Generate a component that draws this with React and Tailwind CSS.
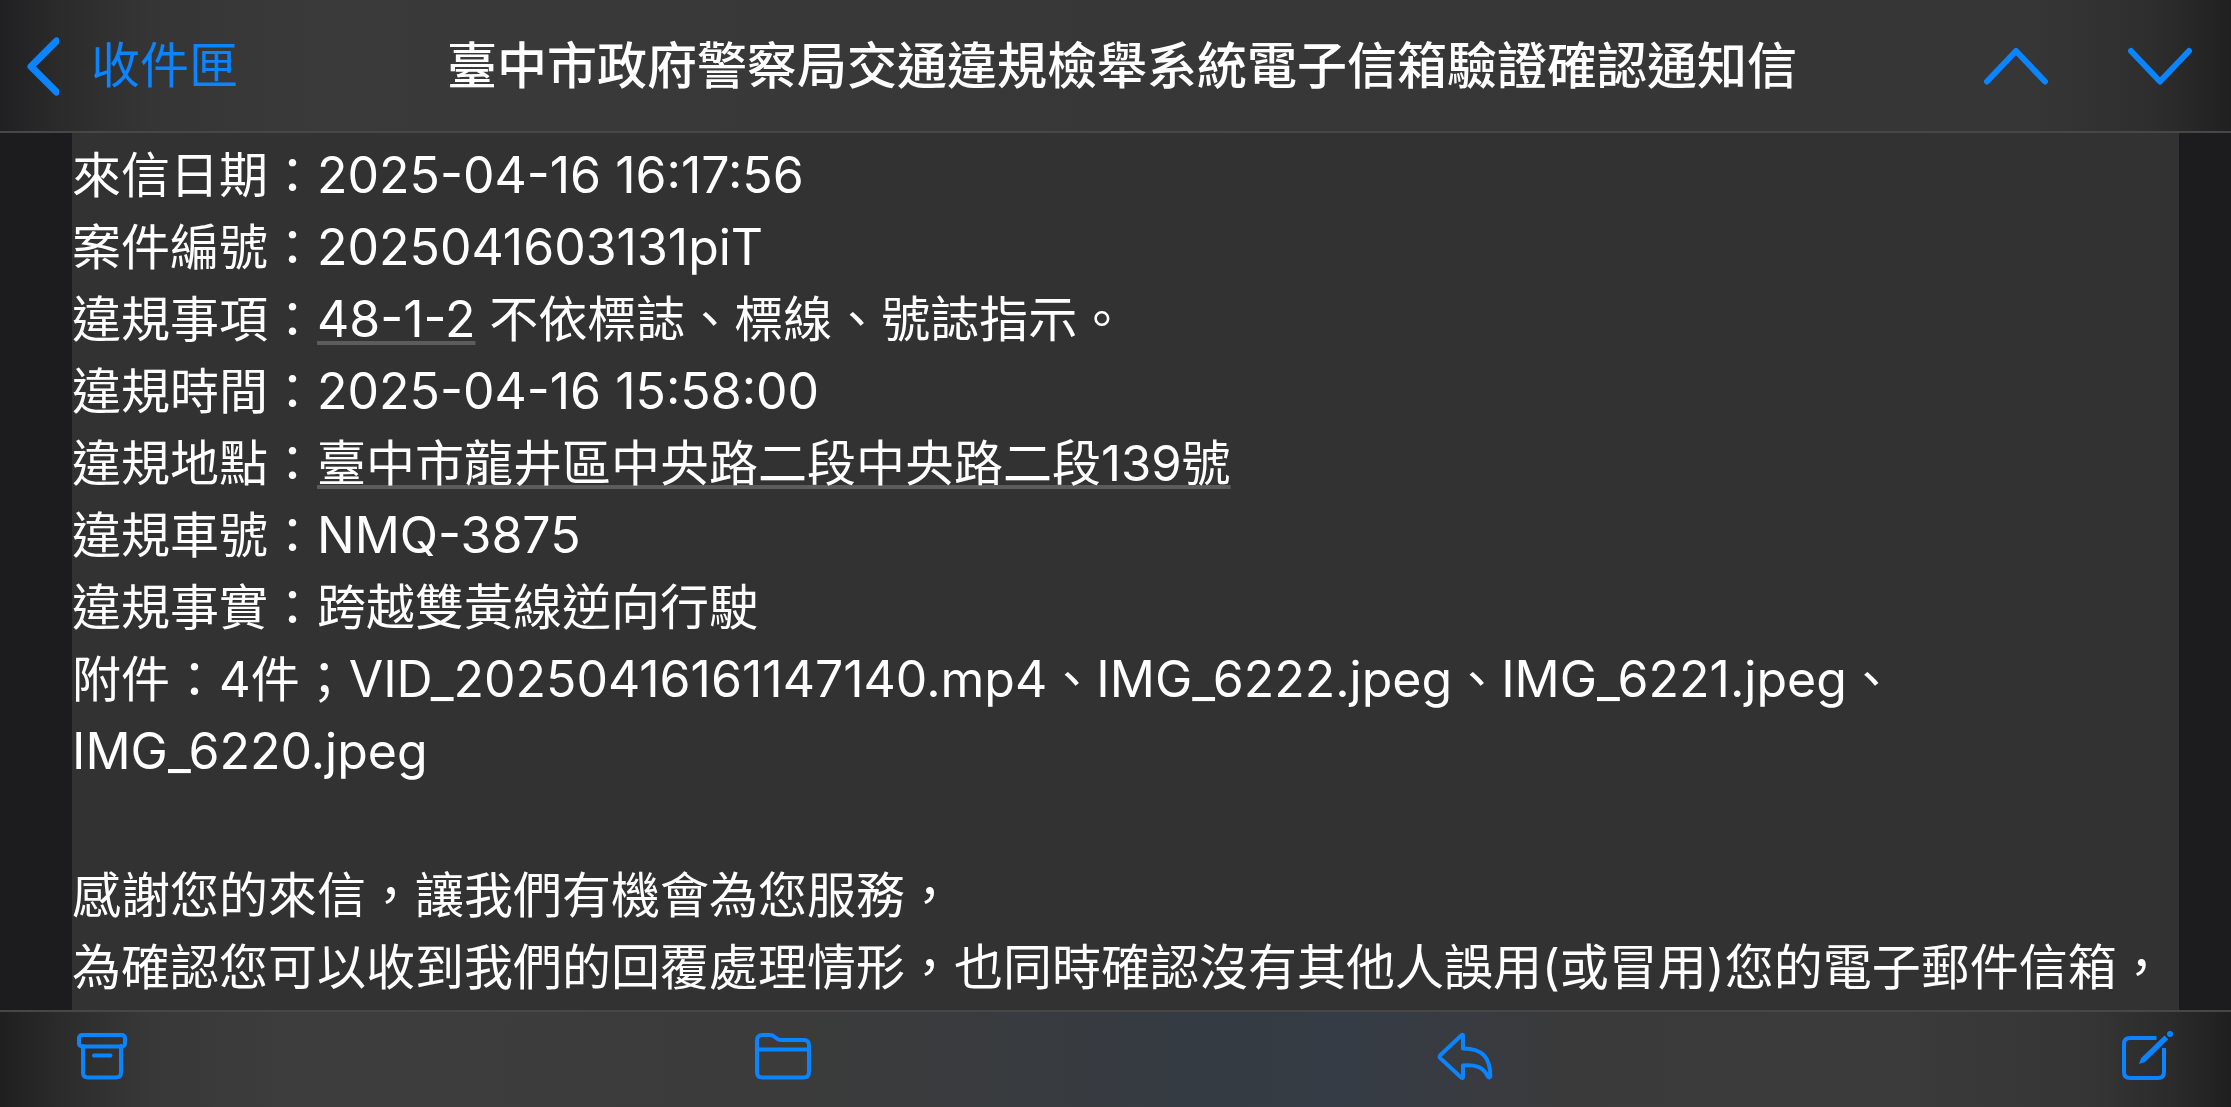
const ICON = "text-[#0a84ff]";

function Icon({ children, className, viewBox }) {
  return (
    <svg
      aria-hidden="true"
      viewBox={viewBox}
      className={`block ${className}`}
      fill="none"
      stroke="currentColor"
      strokeWidth="4"
      strokeLinecap="round"
      strokeLinejoin="round"
    >
      {children}
    </svg>
  );
}

function Detected({ children }) {
  return (
    <a
      href="#"
      className="underline decoration-[#5c5c5c] decoration-4 underline-offset-[4px] [text-decoration-skip-ink:none]"
    >
      {children}
    </a>
  );
}

function Latin({ children }) {
  return <span className="text-[50px] leading-none">{children}</span>;
}

const headerShade =
  "bg-[linear-gradient(to_right,#202022_0,#2b2b2c_60px,#353536_150px,#3a3a3b_320px,#373738_50%,#363637_calc(100%-200px),#2e2e2f_calc(100%-80px),#202021_100%)]";

export default function App() {
  return (
    <div className="flex h-screen flex-col overflow-hidden bg-[#1c1c1e] text-[49px] leading-[72px] text-white [font-family:Inter,'Noto_Sans_CJK_TC',sans-serif]">
      <header
        className={`flex h-[133px] shrink-0 items-center border-b-2 border-[#474748] pr-[37px] pl-[25px] ${headerShade}`}
      >
        <button type="button" className={`flex items-center gap-8 ${ICON}`}>
          <Icon viewBox="0 0 34 60" className="h-[60px] w-[34px]">
            <path d="M31.5 5 6 30.500 31.5 56" strokeWidth="7" />
          </Icon>
          收件匣
        </button>
        <h1 className="min-w-0 flex-1 pl-6 text-center text-[50px] font-medium whitespace-nowrap">
          臺中市政府警察局交通違規檢舉系統電子信箱驗證確認通知信
        </h1>
        <nav className={`flex items-center gap-[76px] ${ICON}`} aria-label="郵件">
          <button type="button" aria-label="上一封">
            <Icon viewBox="0 0 68 40" className="h-10 w-[68px]">
              <path d="M5 35.5 34 5 63 35.5" strokeWidth="6" />
            </Icon>
          </button>
          <button type="button" aria-label="下一封">
            <Icon viewBox="0 0 68 40" className="h-10 w-[68px]">
              <path d="M5 5 34 35.5 63 5" strokeWidth="6" />
            </Icon>
          </button>
        </nav>
      </header>

      <main className="mr-[52px] ml-[72px] min-h-0 flex-1 overflow-hidden bg-[#323232] pt-[7px]">
        <p>
          來信日期：<Latin>2025-04-16 16:17:56</Latin>
        </p>
        <p>
          案件編號：<Latin>2025041603131piT</Latin>
        </p>
        <p>
          違規事項：
          <Detected>
            <Latin>48-1-2</Latin>
          </Detected>{" "}
          不依標誌、標線、號誌指示。
        </p>
        <p>
          違規時間：<Latin>2025-04-16 15:58:00</Latin>
        </p>
        <p>
          違規地點：<Detected>臺中市龍井區中央路二段中央路二段139號</Detected>
        </p>
        <p>
          違規車號：<Latin>NMQ-3875</Latin>
        </p>
        <p>違規事實：跨越雙黃線逆向行駛</p>
        <p>
          附件：4件；<Latin>VID_20250416161147140.mp4</Latin>、<Latin>IMG_6222.jpeg</Latin>、
          <Latin>IMG_6221.jpeg</Latin>、<Latin>IMG_6220.jpeg</Latin>
        </p>
        <p className="mt-[72px]">感謝您的來信，讓我們有機會為您服務，</p>
        <p>為確認您可以收到我們的回覆處理情形，也同時確認沒有其他人誤用(或冒用)您的電子郵件信箱，</p>
      </main>

      <footer
        className="flex h-[97px] shrink-0 items-start justify-between border-t-2 border-[#474748] bg-[linear-gradient(to_right,#1f1f20_0,#2b2b2c_60px,#383839_150px,#3d3d3d_300px,#3b3b3b_36%,#353b43_55%,#363c45_61%,#3a3a3b_70%,#3b3b3c_85%,#353536_calc(100%-140px),#2b2b2c_calc(100%-60px),#1f1f20_100%)] pt-[18px] pr-14 pl-[74px] text-[#0a84ff]"
      >
        <button type="button" aria-label="封存">
          <Icon viewBox="0 0 56 54" className="h-[54px] w-14">
            <rect x="5" y="5" width="46" height="11.500" rx="3" />
            <path d="M9 16v26.500q0 5 5 5h28q5 0 5-5V16M20 25.500h16.500" />
          </Icon>
        </button>
        <button type="button" aria-label="移動">
          <Icon viewBox="0 0 62 54" className="h-[54px] w-[62px]">
            <path d="M5 42V10.500q0-5.500 5.500-5.500h7q3 0 5 1.800l2.500 2q1.500 1.200 4 1.200h23q5 0 5 5.500V42q0 5.500-5.500 5.500h-41Q5 47.500 5 42ZM5 19.500h52" />
          </Icon>
        </button>
        <button type="button" aria-label="回覆">
          <Icon viewBox="0 0 62 54" className="h-[54px] w-[62px]">
            <path d="M28 5.500Q28 4 26.500 5.300L5.500 25q-1.800 1.700 0 3.400L26.500 47.700q1.500 1 1.500-.7V35.500c12-.8 20 1 25 11 .9 1.600 2.500 1 2.400-.8C55 28 48 18.500 28 18.500Z" />
          </Icon>
        </button>
        <button type="button" aria-label="撰寫">
          <Icon viewBox="0 0 56 54" className="h-[54px] w-14">
            <path d="M37.500 8H11q-6 0-6 6v28q0 6 6 6h28q6 0 6-6V18" strokeLinecap="butt" />
            <path d="m20 34 2.200-6L45.500 5.500l3.800 3.800L26 32Z" fill="currentColor" stroke="none" />
            <circle cx="51" cy="4" r="3" fill="currentColor" stroke="none" />
          </Icon>
        </button>
      </footer>
    </div>
  );
}
